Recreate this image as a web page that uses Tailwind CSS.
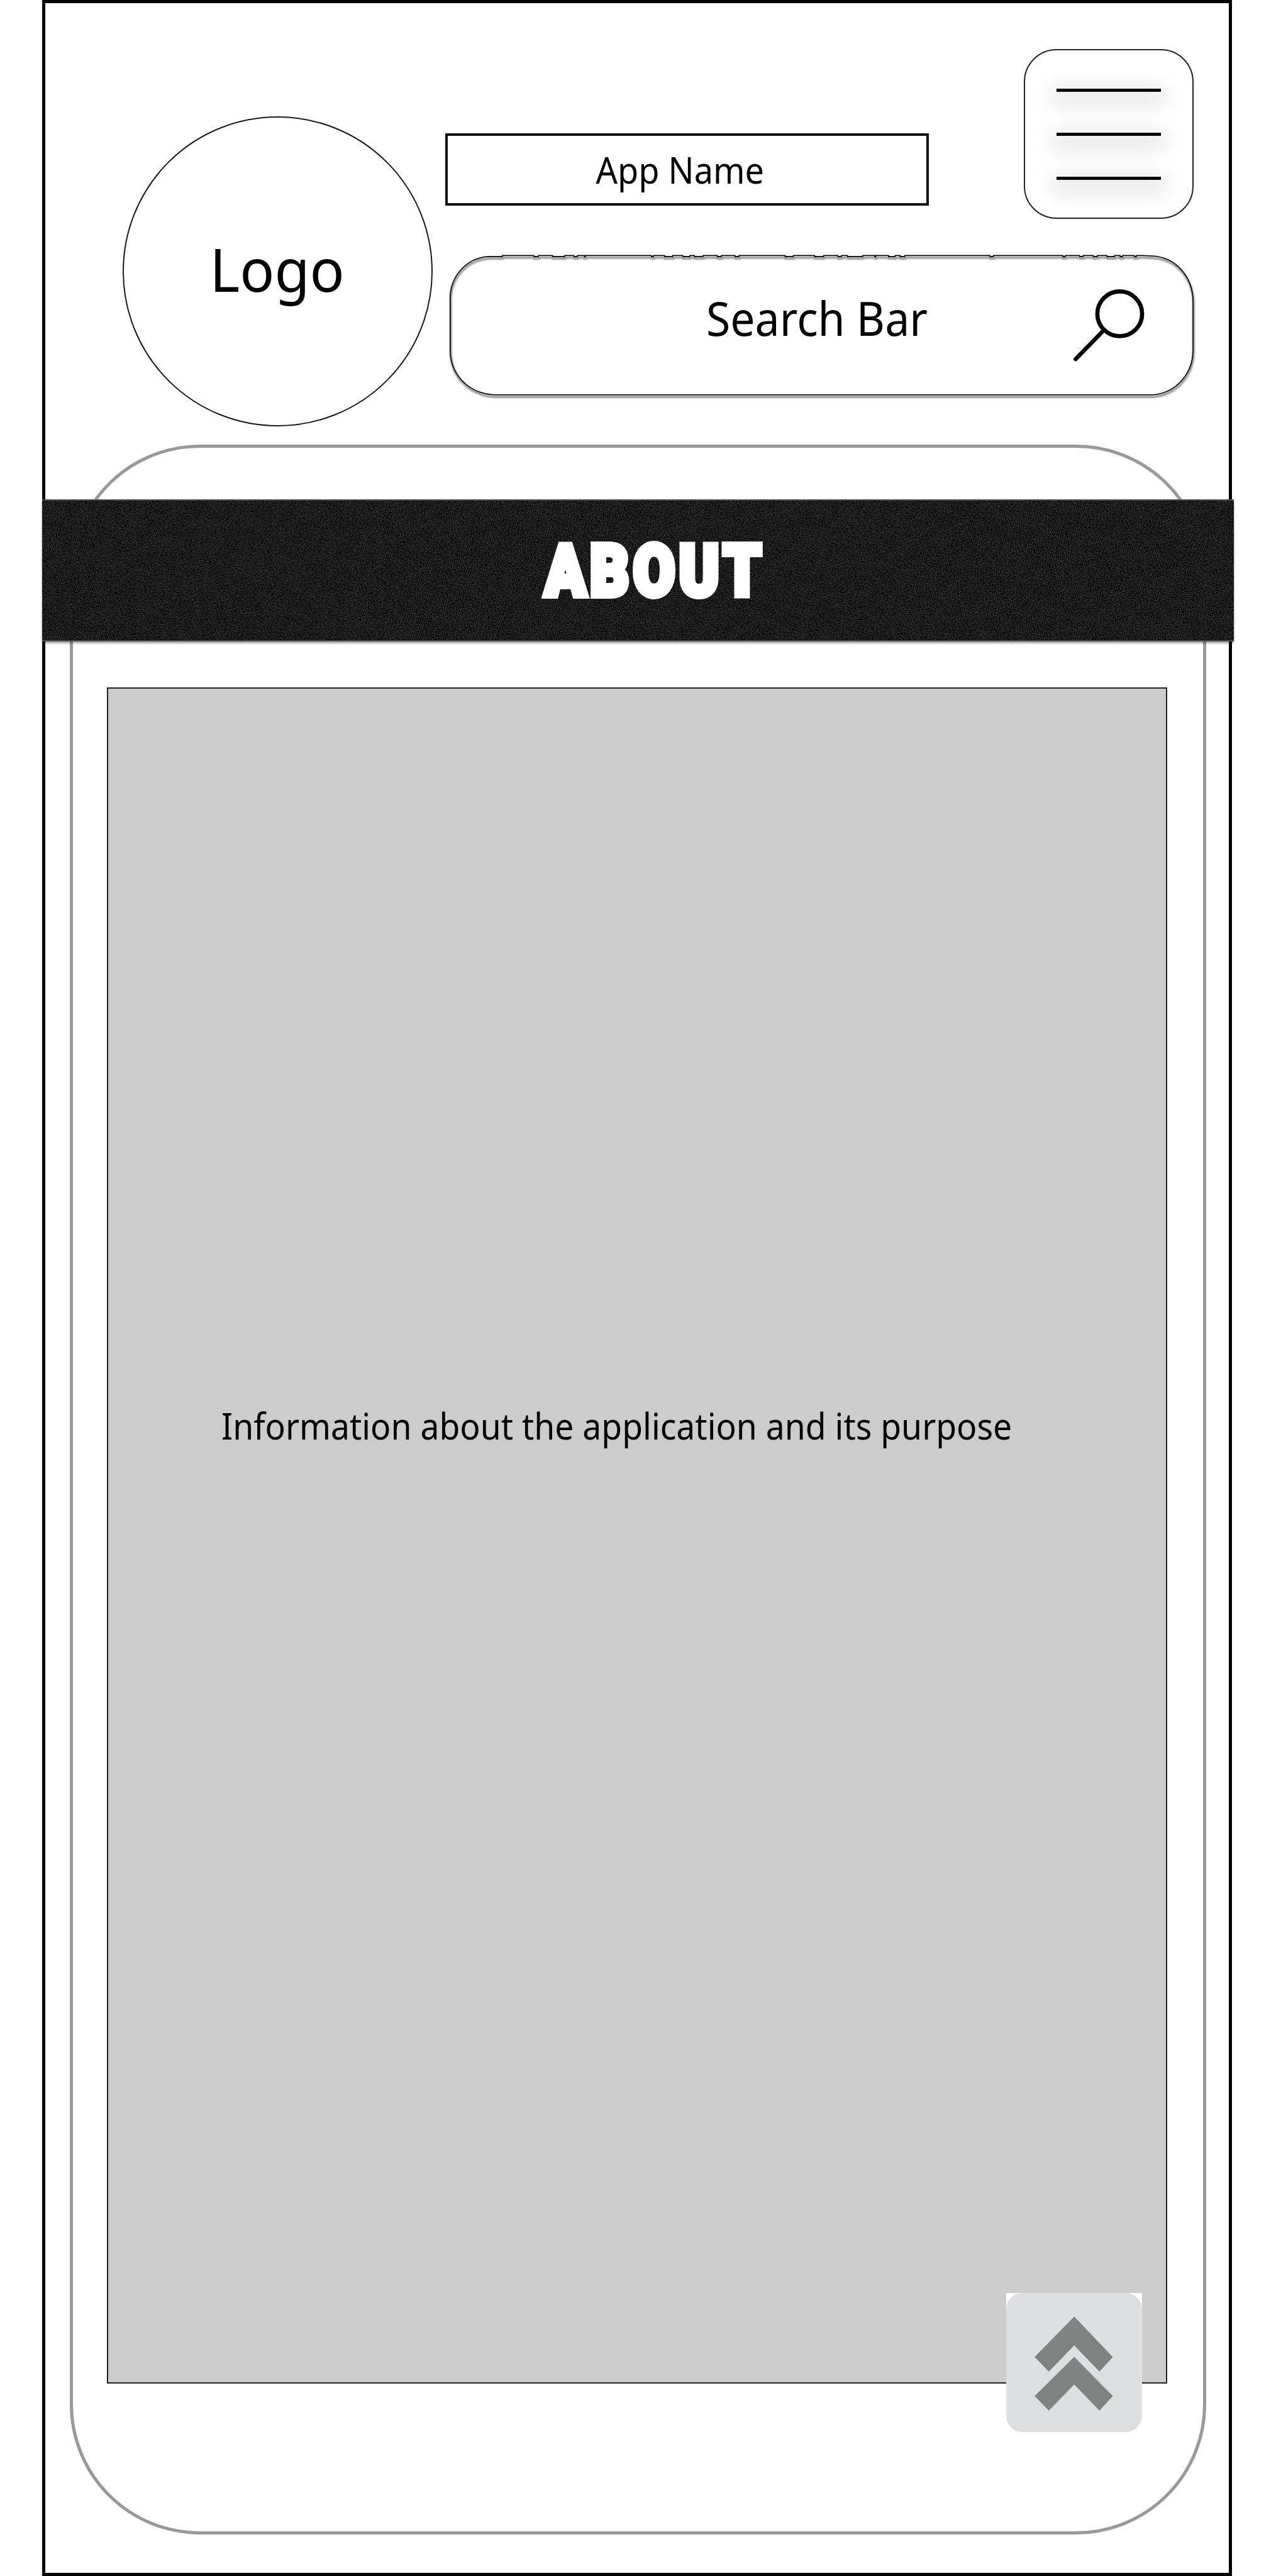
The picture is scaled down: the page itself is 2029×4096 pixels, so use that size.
<!DOCTYPE html>
<html lang="en">
<head>
<meta charset="utf-8">
<title>About</title>
<script src="https://cdn.jsdelivr.net/npm/@tailwindcss/browser@4"></script>
</head>
<body class="bg-white text-black font-['Noto_Sans',sans-serif]">
<main class="ml-[67px] w-[1892px] h-[4096px] border-[5px] border-black flex flex-col overflow-visible">
  <header class="h-[702px] shrink-0 flex">
    <div class="ml-[123px] mt-[180px] size-[493px] shrink-0 rounded-full border-2 border-[#1a1a1a] flex justify-center">
      <span class="-ml-0.5 mt-[176px] h-32 leading-[128px] text-[95px] inline-block scale-x-[0.96]">Logo</span>
    </div>
    <div class="ml-[20px] mt-[73px] w-[1190px] flex flex-col">
      <div class="flex h-[270px] justify-between">
        <h1 class="mt-[134px] w-[769px] h-[115px] border-4 border-[#111] flex justify-center">
          <span class="-ml-[22px] mt-[14px] h-20 leading-20 text-[57.5px] whitespace-nowrap scale-x-[0.94]">App Name</span>
        </h1>
        <button class="size-[270px] rounded-[52px] border-2 border-[#222] flex flex-col items-center pt-[61px] gap-[65px]">
          <i class="block w-[166px] h-[5px] bg-black shadow-[0_10px_34px_8px_rgba(0,0,0,0.14)]"></i>
          <i class="block w-[166px] h-[5px] bg-black shadow-[0_10px_34px_8px_rgba(0,0,0,0.14)]"></i>
          <i class="block w-[166px] h-[5px] bg-black shadow-[0_10px_34px_8px_rgba(0,0,0,0.14)]"></i>
        </button>
      </div>
      <div class="relative ml-[7px] mt-[57px] w-[1183px] h-[224px] flex">
        <svg class="absolute inset-0 size-full overflow-visible" viewBox="887 502.5 1468 278" fill="none">
          <defs>
            <filter id="soft" x="-2%" y="-5%" width="104%" height="110%"><feGaussianBlur stdDeviation="1.2"/></filter>
            <path id="outline" d="M888 640V588C888 545 920 508 965 506H991V504H1053V506H1062V504H1090V506H1114V504H1132V506H1139V504H1153V506H1155V504H1285V506H1289V504H1311V506H1327V504H1347V506H1361V504H1370V506H1387V504H1415V506H1423V504H1450V506H1458V504H1549V506H1565V504H1607V506H1625V504H1653V506H1660V504H1672V506H1702V504H1726V506H1728V504H1753V506H1766V504H1776V506H1785V504H1953V506H1960V504H2097V506H2102V504H2130V506H2137V504H2157V506H2165V504H2184V506H2199V504H2210V506H2215V504H2238V506H2242V504H2255L2273 505C2322 507 2354 548 2354 596V690C2354 738 2320 775 2275 779H973C922 775 888 738 888 690Z"/>
          </defs>
          <use href="#outline" x="1" y="4" stroke="#000" stroke-opacity=".4" stroke-width="5" filter="url(#soft)"/>
          <use href="#outline" stroke="#000" stroke-width="2"/>
        </svg>
        <span class="ml-[408px] mt-[50px] h-25 leading-25 text-[75.4px] whitespace-nowrap origin-left scale-x-[0.925]">Search Bar</span>
        <svg class="absolute left-[989px] top-[50px] w-[120px] h-[120px]" viewBox="2114 565 149 149" fill="none" stroke="#000" stroke-width="8.2" stroke-linecap="round">
          <circle cx="2209" cy="619.6" r="44.2"/><path d="M2177 652.5 2122 709"/>
        </svg>
      </div>
    </div>
  </header>
  <section class="relative ml-[39px] w-[1807px] h-[3323px] shrink-0 rounded-[207px] border-[5px] border-[#999] flex flex-col">
    <div class="relative -ml-[49px] mt-[82px] w-[1895px] h-[226px] shrink-0 border-y-2 border-[#4c4c47] bg-[#1a1a1a] shadow-[0_3px_3px_rgba(0,0,0,0.35)] flex justify-center">
      <svg class="absolute inset-0 size-full">
        <filter id="grain" x="0" y="0" width="100%" height="100%" color-interpolation-filters="sRGB">
          <feTurbulence type="fractalNoise" baseFrequency="0.63" numOctaves="3" seed="4"/>
          <feColorMatrix values="4 0 0 0 -1.45 4 0 0 0 -1.45 4 0 0 0 -1.45 0 0 0 0 1"/>
          <feComponentTransfer>
            <feFuncR type="linear" slope="0.19"/>
            <feFuncG type="linear" slope="0.19"/>
            <feFuncB type="linear" slope="0.19"/>
          </feComponentTransfer>
        </filter>
        <rect width="100%" height="100%" filter="url(#grain)"/>
      </svg>
      <h2 class="relative mt-[37px] ml-[54px] h-[150px] leading-[150px] tracking-[8px] text-[114px] font-black text-white font-['Roboto',sans-serif] scale-x-[0.84] [-webkit-text-stroke:10px_white]">ABOUT</h2>
    </div>
    <article class="ml-[54px] mt-[73px] w-[1686px] h-[2697px] shrink-0 bg-[#ccc] border-2 border-[#222] flex">
      <p class="ml-[180px] mt-[1132px] h-20 leading-20 text-[57.5px] whitespace-nowrap origin-left scale-x-[0.93]">Information about the application and its purpose</p>
    </article>
    <button class="absolute left-[1484px] top-[2934px] w-[216px] h-[221px] bg-white" aria-label="Back to top">
      <svg class="size-full" viewBox="1986 4525.5 267.5 274" preserveAspectRatio="none">
        <rect x="1986" y="4525.5" width="267.5" height="274" rx="32" fill="#dddee0"/>
        <path fill="#808281" d="M2120 4572 2196 4651.6 2169.5 4680.5 2120 4628.6 2070 4680.5 2042 4651.6ZM2120 4651.2 2196 4728.8 2169.5 4757.3 2120 4705.8 2070 4757.3 2042 4728.8Z"/>
      </svg>
    </button>
  </section>
</main>
</body>
</html>
